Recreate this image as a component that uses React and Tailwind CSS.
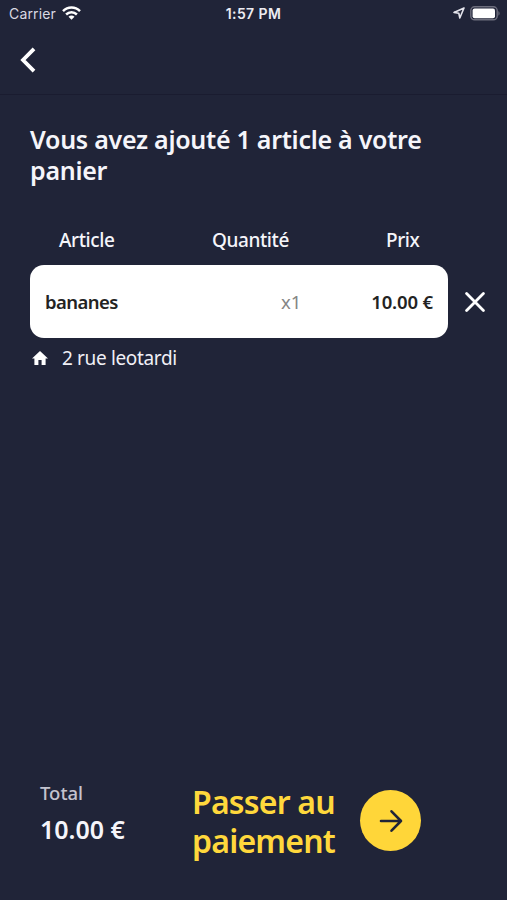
const items = [{ id: 1, name: 'bananes', quantity: 1, price: '10.00 €', address: '2 rue leotardi' }];

function StatusBar() {
  return (
    <div className="relative flex h-7 items-center justify-between pl-[9px] pr-[7px] pb-[2px] font-['Inter',sans-serif] text-[14px] text-[#d9d9e2]">
      <div className="flex items-center gap-[6px]">
        <span className="tracking-[0.15px]">Carrier</span>
        <svg width="19" height="14" viewBox="0 0 19 14" fill="none" stroke="white" strokeWidth="2.5">
          <path d="M1 5.2C5.8 .4 13.2 .4 18 5.2" />
          <path d="M4.1 8.5c3.1-3 7.7-3 10.8 0" />
          <path d="M9.5 13.7 6.5 10.8c1.8-1.6 4.2-1.6 6 0Z" fill="white" stroke="none" />
        </svg>
      </div>
      <span className="absolute left-1/2 -translate-x-1/2 whitespace-nowrap font-semibold text-[#ececf2] tracking-[0.4px]">1:57 PM</span>
      <div className="flex items-center gap-[5px]">
        <svg width="12" height="12" viewBox="0 0 12 12" fill="none" stroke="#e4e4ec" strokeWidth="1.6" strokeLinejoin="round">
          <path d="M11 1 1 5.4l4.8.8L6.8 11Z" />
        </svg>
        <svg width="30" height="15" viewBox="0 0 30 15">
          <rect x="0.8" y="0.8" width="26.4" height="13" rx="3.8" fill="none" stroke="#6d6e7d" strokeWidth="1.4" />
          <rect x="2.6" y="2.6" width="22.4" height="9.6" rx="2" fill="white" />
          <path d="M28.4 5c1.6.8 1.6 4 0 4.8Z" fill="#6d6e7d" />
        </svg>
      </div>
    </div>
  );
}

function CartItem({ item }) {
  return (
    <div>
      <div className="flex items-center">
        <div className="flex h-[73px] w-[418px] items-center rounded-[14px] bg-white pl-[15px] pr-[15px] text-[18.5px] font-semibold text-[#232323]">
          <span className="w-[236px] tracking-[-0.55px]">{item.name}</span>
          <span className="font-normal text-[#858585]">x{item.quantity}</span>
          <span className="ml-auto tracking-[-0.15px]">{item.price}</span>
        </div>
        <svg className="ml-[17px]" width="20" height="20" viewBox="0 0 20 20" stroke="white" strokeWidth="2.8" strokeLinecap="round">
          <path d="m1.6 1.6 16.8 16.8M18.4 1.6 1.6 18.4" />
        </svg>
      </div>
      <div className="mt-[6px] flex h-7 items-center text-[19px] text-[#f0f0f6]">
        <svg className="ml-[2px] mr-[14px]" width="16" height="14" viewBox="2 3 20 17" preserveAspectRatio="none" fill="white">
          <path d="M10 20v-6h4v6h5v-8h3L12 3 2 12h3v8z" />
        </svg>
        <span className="tracking-[-0.35px]">{item.address}</span>
      </div>
    </div>
  );
}

export default function App() {
  return (
    <div className="flex h-[900px] w-[507px] flex-col overflow-hidden bg-[#202438] font-['Noto_Sans',sans-serif] text-[#f5f5fa]">
      <StatusBar />
      <header className="h-[67px] border-b border-[#1a1c30] pl-5 pt-[19px]">
        <svg width="16" height="26" viewBox="0 0 16 26" fill="none" stroke="white" strokeWidth="3.8">
          <path d="M14 1.8 3 13l11 11.2" />
        </svg>
      </header>

      <main className="flex-1 pl-[30px] pt-[29px]">
        <h1 className="w-[420px] text-[25px] font-semibold leading-[31px] tracking-[-0.27px]">
          Vous avez ajouté 1 article à votre<br />panier
        </h1>
        <div className="mt-[40px] flex h-[28px] items-center text-[19px] font-medium tracking-[-0.4px]">
          <span className="ml-[29px] w-[153px]">Article</span>
          <span className="w-[174px]">Quantité</span>
          <span>Prix</span>
        </div>
        <div className="mt-[11px]">
          {items.map(item => <CartItem key={item.id} item={item} />)}
        </div>
      </main>

      <footer className="flex h-[127px] pl-10">
        <div className="w-[152px] pt-[6px]">
          <p className="text-[18.5px] font-medium leading-[28px] text-[#c3c3cf]">Total</p>
          <p className="mt-[5px] text-[25px] font-semibold leading-[34px]">10.00 €</p>
        </div>
        <p className="w-[168px] pt-[9px] text-[32px] font-semibold leading-[39px] tracking-[-0.8px] text-[#ffd83c]">
          Passer au<br />paiement
        </p>
        <button className="mt-[17px] flex h-[61px] w-[61px] items-center justify-center rounded-full bg-[#ffd639]">
          <svg width="24" height="24" viewBox="0 0 24 24" fill="none" stroke="#202438" strokeWidth="2.6" strokeLinecap="round" strokeLinejoin="round">
            <path d="M2 12h20M12.5 2.3 22 12l-9.500 9.700" />
          </svg>
        </button>
      </footer>
    </div>
  );
}
